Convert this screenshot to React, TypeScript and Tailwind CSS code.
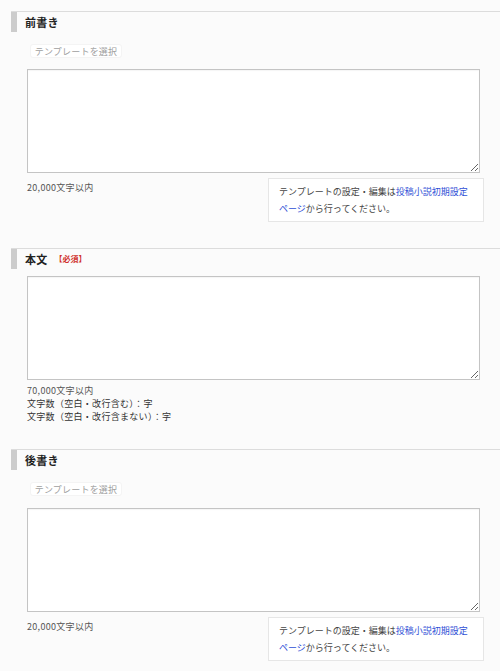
const font = {
  fontFamily: '"Noto Sans CJK JP", "Noto Sans", sans-serif',
};

function SectionHeader({ title, required }: { title: string; required?: boolean }) {
  return (
    <div className="ml-[11px] flex h-[21px] items-stretch border-t border-[#dcdcdc]">
      <div className="w-[6px] bg-[#cccccc]" />
      <div className="flex items-center pl-[8px]">
        <span className="text-[11px] font-bold tracking-[0.3px] text-[#222]">{title}</span>
        {required && (
          <span className="ml-[7px] text-[8px] font-bold text-[#d0312d]">【必須】</span>
        )}
      </div>
    </div>
  );
}

function TemplateButton() {
  return (
    <div className="ml-[30px] mt-[12px] flex h-[14px] w-[92px] items-center justify-center rounded-[3px] border border-[#f4f4f4] bg-white text-[9px] leading-none tracking-[0.2px] text-[#a0a0a0]">
      テンプレートを選択
    </div>
  );
}

function Editor() {
  return (
    <div className="ml-[27px] mr-[20px]">
      <textarea className="block h-[104px] w-full resize-y border border-[#c4c4c4] bg-white shadow-[inset_0_1px_1px_rgba(0,0,0,0.04)] outline-none" />
    </div>
  );
}

function InfoRow({ limit }: { limit: string }) {
  return (
    <div className="ml-[27px] mr-[16px] mt-[5px] flex items-start justify-between">
      <p className="mt-[3px] text-[9px] leading-[13px] tracking-[0.3px] text-[#555]">{limit}</p>
      <div className="w-[216px] border border-[#e6e6e6] bg-white px-[10px] py-[4px] text-[9px] leading-[17px] text-[#444]">
        <p>
          テンプレートの設定・編集は<span className="text-[#2f4fd6]">投稿小説初期設定</span>
        </p>
        <p>
          <span className="text-[#2f4fd6]">ページ</span>から行ってください。
        </p>
      </div>
    </div>
  );
}

export default function App() {
  return (
    <div className="min-h-[671px] w-[500px] bg-[#fbfbfb] pt-[11px]" style={font}>
      {/* 前書き */}
      <section>
        <SectionHeader title="前書き" />
        <TemplateButton />
        <div className="mt-[11px]">
          <Editor />
        </div>
        <InfoRow limit="20,000文字以内" />
      </section>

      {/* 本文 */}
      <section className="mt-[26px]">
        <SectionHeader title="本文" required />
        <div className="mt-[7px]">
          <Editor />
        </div>
        <div className="ml-[27px] mt-[4px] text-[9px] leading-[13px] tracking-[0.3px] text-[#333]">
          <p className="text-[#555]">70,000文字以内</p>
          <p>文字数（空白・改行含む）：字</p>
          <p>文字数（空白・改行含まない）：字</p>
        </div>
      </section>

      {/* 後書き */}
      <section className="mt-[26px]">
        <SectionHeader title="後書き" />
        <TemplateButton />
        <div className="mt-[12px]">
          <Editor />
        </div>
        <InfoRow limit="20,000文字以内" />
      </section>
    </div>
  );
}
